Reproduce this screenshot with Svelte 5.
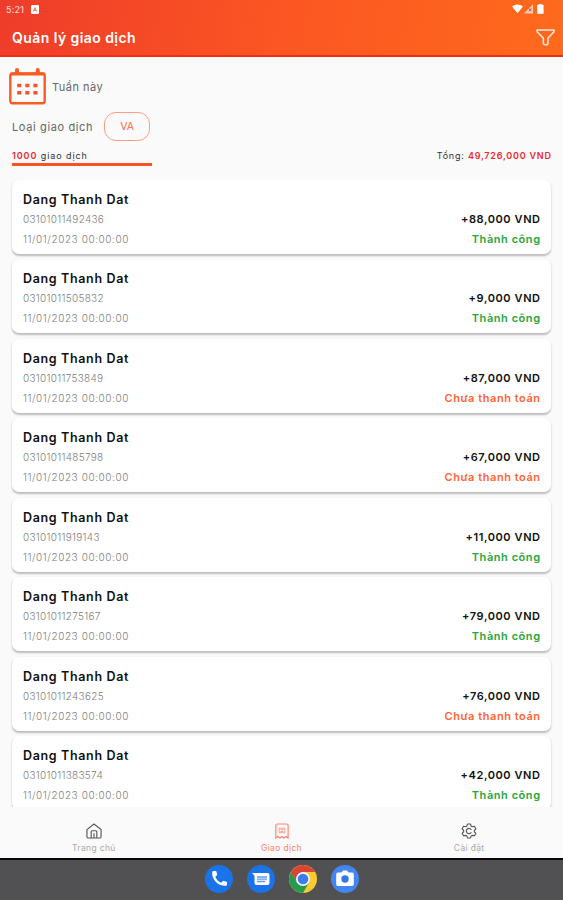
<script lang="ts">
  type Status = 'paid' | 'unpaid';

  interface Transaction {
    name: string;
    account: string;
    time: string;
    amount: string;
    status: Status;
  }

  const statusLabels: Record<Status, string> = {
    paid: 'Thành công',
    unpaid: 'Chưa thanh toán'
  };

  const rows: [string, string, Status][] = [
    ['03101011492436', '+88,000 VND', 'paid'],
    ['03101011505832', '+9,000 VND', 'paid'],
    ['03101011753849', '+87,000 VND', 'unpaid'],
    ['03101011485798', '+67,000 VND', 'unpaid'],
    ['03101011919143', '+11,000 VND', 'paid'],
    ['03101011275167', '+79,000 VND', 'paid'],
    ['03101011243625', '+76,000 VND', 'unpaid'],
    ['03101011383574', '+42,000 VND', 'paid']
  ];

  const transactions: Transaction[] = rows.map(([account, amount, status]) => ({
    name: 'Dang Thanh Dat',
    account,
    time: '11/01/2023 00:00:00',
    amount,
    status
  }));

  let activeTab = $state('transactions');
</script>

<div class="screen">
  <header class="header">
    <div class="status-bar">
      <span class="clock">5:21</span>
      <svg class="notice" viewBox="0 0 8 9" aria-hidden="true">
        <rect width="8" height="9" rx="1.3" fill="#fff" />
        <path d="M2.5 6.4 4 2.6l1.5 3.8M3 5.2h2" fill="none" stroke="#f2613f" stroke-width="0.9" />
      </svg>
      <svg class="signals" viewBox="0 0 32 10" aria-hidden="true">
        <path d="M0 2.6Q5.5-1.8 11 2.6L5.5 9.2Z" fill="#fff" />
        <path d="M21 .2V9.6H11.8Z" fill="#ffc9b2" />
        <path d="m17 4.5 2.5 2.7m0-2.7L17 7.2" stroke="#d9432b" stroke-width="1" />
        <path d="M25.500 1h1.500V0h2.800v1h1.500v8.700h-5.800z" fill="#fff" stroke="#fff" stroke-linejoin="round" stroke-width=".5" />
      </svg>
    </div>
    <div class="title-bar">
      <h1>Quản lý giao dịch</h1>
      <button type="button" class="filter" aria-label="Lọc">
        <svg viewBox="0 0 19 17">
          <path
            d="M1 1h17v1.8l-6 6.3v4.8c0 1-1 1.8-2.5 1.8S7.3 15 7.3 14V9.1L1 2.8z"
            fill="none"
            stroke="#ffe7dc"
            stroke-width="1.5"
            stroke-linejoin="round"
          />
        </svg>
      </button>
    </div>
  </header>

  <section class="filters">
    <div class="period">
      <svg class="calendar" viewBox="0 0 37 37" aria-hidden="true">
        <rect x="1.300" y="5.500" width="34.400" height="29.800" rx="2.200" fill="none" stroke="#fb5a22" stroke-width="2.400" />
        <path d="M1.500 6h34" fill="none" stroke="#fb5a22" stroke-width="2.800" />
        <path d="M8 2v3M28.800 2v3" stroke="#fb5a22" stroke-width="4" stroke-linecap="round" />
        <path
          d="M8.200 17.500h4M16.300 17.500h4M24.400 17.500h4M8.200 24.700h4M16.300 24.700h4M24.400 24.700h4"
          stroke="#f5512a"
          stroke-width="3.500"
        />
      </svg>
      <span>Tuần này</span>
    </div>
    <div class="kind">
      <span>Loại giao dịch</span>
      <button type="button" class="chip">VA</button>
    </div>
    <div class="summary">
      <div class="count"><b>1000</b> giao dịch</div>
      <div class="total">Tổng: <b>49,726,000 VND</b></div>
    </div>
  </section>

  <main class="list">
    {#each transactions as item (item.account)}
      <article class="card">
        <div class="name">{item.name}</div>
        <div class="line">
          <span class="account">{item.account}</span>
          <span class="amount">{item.amount}</span>
        </div>
        <div class="line">
          <span class="time">{item.time}</span>
          <span class="status {item.status}">{statusLabels[item.status]}</span>
        </div>
      </article>
    {/each}
  </main>

  <nav class="tabs">
    <button type="button" class:active={activeTab === 'home'} onclick={() => (activeTab = 'home')}>
      <svg viewBox="0 0 17 17">
        <path d="M1 7 8.500 1 16 7v7.500q0 1.500-1.500 1.500h-12Q1 16 1 14.500z" />
        <path d="M5.500 16V9.200q0-1 1-1h4q1 0 1 1V16M8.500 11v5" />
      </svg>
      <span>Trang chủ</span>
    </button>
    <button
      type="button"
      class:active={activeTab === 'transactions'}
      onclick={() => (activeTab = 'transactions')}
    >
      <svg viewBox="0 0 17 17">
        <path d="M3.500 1h10Q15 1 15 2.500V16l-2.200-1.700L10.700 16l-2.200-1.700L6.300 16l-2.100-1.700L2 16V2.500Q2 1 3.500 1z" />
        <path d="M5.500 5.500h6v4.800h-6zM7 7h3M7 9h3" stroke-width="0.8" />
      </svg>
      <span>Giao dịch</span>
    </button>
    <button
      type="button"
      class:active={activeTab === 'settings'}
      onclick={() => (activeTab = 'settings')}
    >
      <svg viewBox="0 0 17 17">
        <path
          d="M7 1h3l.7 2.200 1.300.8 2.300-.5 1.500 2.600-1.600 1.700v1.500l1.600 1.700-1.500 2.600-2.300-.5-1.300.8L10 16H7l-.7-2.100-1.300-.8-2.300.5L1.200 11l1.600-1.700V7.800L1.200 6.100l1.500-2.600L5 4l1.300-.8z"
          stroke-linejoin="round"
        />
        <path d="M11 7.300A2.800 2.800 0 1 0 11 9.800" />
      </svg>
      <span>Cài đặt</span>
    </button>
  </nav>

  <footer class="dock">
    <svg viewBox="0 0 28 28" aria-label="Phone">
      <circle cx="14" cy="14" r="14" fill="#1a73e8" />
      <path
        d="M7.200 7.200c-.6 7.500 6 14 13.500 13.600q1.300-.1 1.300-1.400v-2.500l-3.700-1.200-2.200 2c-2.500-1.200-4.700-3.300-5.800-5.800l2-2.200-1.100-3.600H8.500q-1.200 0-1.300 1.100z"
        fill="#fff"
      />
    </svg>
    <svg viewBox="0 0 28 28" aria-label="Messages">
      <circle cx="14" cy="14" r="14" fill="#1a73e8" />
      <path d="M5 8h15.500q2 0 2 2v8q0 2-2 2H9.500q-2 0-2-2v-7.300z" fill="#fff" />
      <path d="M10 12h10M10 14.200h10M10 16.500h8" stroke="#5b9af0" stroke-width="1.300" />
    </svg>
    <svg viewBox="0 0 28 28" aria-label="Chrome">
      <circle cx="14" cy="14" r="14" fill="#fbc934" />
      <path d="M14 7h12.100A14 14 0 0 0 1.900 7l6 10.500z" fill="#dd4335" />
      <path d="M1.900 7a14 14 0 0 0 12.100 21l6-10.500H8z" fill="#249b4e" />
      <circle cx="14" cy="14" r="7" fill="#f5f7fb" />
      <circle cx="14" cy="14" r="5.300" fill="#3b7ded" />
    </svg>
    <svg viewBox="0 0 28 28" aria-label="Camera">
      <circle cx="14" cy="14" r="14" fill="#4486f1" />
      <path d="M7 7.500h3.500l1.500-2h4l1.500 2H21q1.800 0 1.800 1.800v10q0 1.700-1.800 1.700H7q-1.800 0-1.800-1.700v-10Q5.200 7.500 7 7.500z" fill="#fff" />
      <circle cx="14" cy="14" r="3.700" fill="#3278e4" />
    </svg>
  </footer>
</div>

<style>
  :global(body) {
    margin: 0;
  }

  .screen {
    display: flex;
    flex-direction: column;
    width: 563px;
    height: 900px;
    overflow: hidden;
    background: #fafafa;
    font-family: Inter, 'Noto Sans', sans-serif;
    color: #111;
  }

  button {
    padding: 0;
    border: 0;
    background: none;
    font: inherit;
    color: inherit;
    cursor: pointer;
  }

  .header {
    box-sizing: border-box;
    flex: none;
    height: 57px;
    border-bottom: 2px solid #f52c10;
    background: linear-gradient(100deg, #ee3c2a 0%, #fb5523 48%, #ff6a1c 100%);
    color: #fff;
  }

  .status-bar {
    display: flex;
    align-items: center;
    height: 18px;
    padding: 0 19px 0 6px;
  }

  .clock {
    width: 25px;
    font-size: 9px;
    letter-spacing: 0.2px;
    color: #ffe0d8;
  }

  .notice {
    width: 8px;
    height: 9px;
  }

  .signals {
    width: 32px;
    height: 10px;
    margin-left: auto;
  }

  .title-bar {
    display: flex;
    align-items: center;
    justify-content: space-between;
    height: 39px;
    padding: 0 8px 0 12px;
  }

  h1 {
    margin: 0;
    font-size: 14px;
    font-weight: 600;
    letter-spacing: 0.43px;
  }

  .filter svg {
    display: block;
    width: 19px;
    height: 17px;
  }

  .filters {
    flex: none;
    height: 123px;
    color: #666;
    font-size: 11px;
  }

  .period {
    display: flex;
    align-items: center;
    gap: 6px;
    padding: 11px 0 0 9px;
    letter-spacing: 0.5px;
  }

  .calendar {
    width: 37px;
    height: 37px;
  }

  .kind {
    display: flex;
    align-items: center;
    gap: 11px;
    padding: 7px 0 0 12px;
    letter-spacing: 0.63px;
  }

  .chip {
    box-sizing: border-box;
    width: 46px;
    height: 29px;
    border: 1px solid #ff9c82;
    border-radius: 12px;
    color: #ff6848;
    font-size: 10.500px;
    letter-spacing: 0;
  }

  .summary {
    display: flex;
    justify-content: space-between;
    padding: 7px 12px 0;
    font-size: 9px;
    line-height: 15px;
    color: #333;
  }

  .summary b {
    font-weight: 600;
    color: #ec2b2f;
  }

  .count {
    width: 140px;
    height: 15px;
    border-bottom: 3px solid #fa5321;
    letter-spacing: 0.92px;
  }

  .total {
    margin-right: -0.7px;
    letter-spacing: 0.77px;
  }

  .list {
    display: flex;
    flex: none;
    flex-direction: column;
    gap: 5.450px;
    height: 627px;
    padding: 0 12px;
    overflow: hidden;
  }

  .card {
    box-sizing: border-box;
    flex: none;
    height: 74px;
    padding: 10px 11px 0;
    border-radius: 7px;
    background: #fff;
    box-shadow: 0 1.500px 2px rgba(0, 0, 0, 0.25);
  }

  .name {
    height: 19px;
    font-size: 12.500px;
    font-weight: 600;
    line-height: 20px;
    letter-spacing: 0.65px;
  }

  .line {
    display: flex;
    justify-content: space-between;
    height: 20px;
    font-size: 10px;
    line-height: 20px;
  }

  .account,
  .time {
    color: #808080;
    font-weight: 300;
  }

  .account {
    letter-spacing: 0.3px;
  }

  .time {
    letter-spacing: 0.58px;
  }

  .amount,
  .status {
    margin-right: -0.6px;
    font-size: 11px;
    font-weight: 600;
    letter-spacing: 0.58px;
  }

  .status {
    letter-spacing: 0.55px;
  }

  .paid {
    color: #28a63c;
  }

  .unpaid {
    color: #ff6430;
  }

  .tabs {
    display: flex;
    flex: none;
    height: 51px;
  }

  .tabs button {
    display: flex;
    flex: 1;
    flex-direction: column;
    align-items: center;
    gap: 3px;
    padding-top: 16px;
    color: #555;
    font-size: 8.500px;
    line-height: 12px;
  }

  .tabs svg {
    width: 16px;
    height: 16px;
    fill: none;
    stroke: currentColor;
    stroke-width: 1.200;
  }

  .tabs span {
    color: #aaa;
    letter-spacing: 0.35px;
  }

  .tabs .active,
  .tabs .active span {
    color: #ff8068;
  }

  .dock {
    box-sizing: border-box;
    display: flex;
    flex: 1;
    justify-content: center;
    gap: 14px;
    padding-top: 5px;
    border-top: 2px solid #080808;
    background: #515153;
  }

  .dock svg {
    width: 28px;
    height: 28px;
  }
</style>
